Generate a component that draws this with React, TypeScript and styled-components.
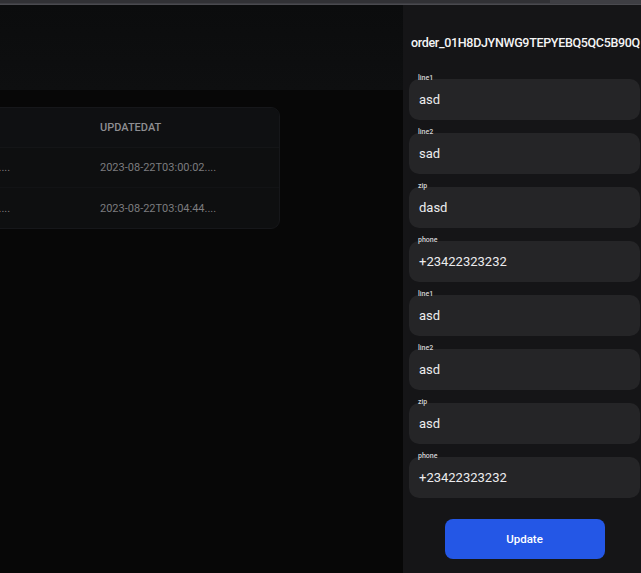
import styled, { createGlobalStyle } from "styled-components";

const GlobalStyle = createGlobalStyle`
  html, body {
    margin: 0;
    padding: 0;
    background: #070707;
    font-family: Roboto, "Liberation Sans", sans-serif;
    overflow: hidden;
  }
  * {
    box-sizing: border-box;
  }
`;

const rows = [
  { created: "2023-08-22T02:59:57....", updated: "2023-08-22T03:00:02...." },
  { created: "2023-08-22T03:04:37....", updated: "2023-08-22T03:04:44...." },
];

const fields = [
  { label: "line1", value: "asd" },
  { label: "line2", value: "sad" },
  { label: "zip", value: "dasd" },
  { label: "phone", value: "+23422323232" },
  { label: "line1", value: "asd" },
  { label: "line2", value: "asd" },
  { label: "zip", value: "asd" },
  { label: "phone", value: "+23422323232" },
];

const App = () => {
  return (
    <>
      <GlobalStyle />
      <StyledPage>
        <TopBar>
          <span className="thumb" />
        </TopBar>
        <Main>
          <LeftPane>
            <PaneHeader />
            <TableWrap>
              <Table>
                <HeadRow>
                  <Cell $head>CREATEDAT</Cell>
                  <Cell $head>UPDATEDAT</Cell>
                </HeadRow>
                {rows.map((r, i) => (
                  <Row key={i} $last={i === rows.length - 1}>
                    <Cell>{r.created}</Cell>
                    <Cell>{r.updated}</Cell>
                  </Row>
                ))}
              </Table>
            </TableWrap>
          </LeftPane>
          <SidePanel>
            <Title>order_01H8DJYNWG9TEPYEBQ5QC5B90Q</Title>
            <FieldList>
              {fields.map((f, i) => (
                <Field key={i}>
                  <FieldLabel>{f.label}</FieldLabel>
                  <FieldBox>{f.value}</FieldBox>
                </Field>
              ))}
            </FieldList>
            <Actions>
              <UpdateButton>Update</UpdateButton>
            </Actions>
          </SidePanel>
        </Main>
      </StyledPage>
    </>
  );
};

const StyledPage = styled.div`
  width: 100vw;
  height: 100vh;
  display: flex;
  flex-direction: column;
`;

const TopBar = styled.div`
  height: 5px;
  background: #3e3e43;
  border-bottom: 1px solid #4a4a4f;
  display: flex;
  .thumb {
    width: 550px;
    height: 3px;
    background: #313135;
  }
`;

const Main = styled.div`
  flex: 1;
  display: flex;
  min-height: 0;
`;

const LeftPane = styled.div`
  flex: 1;
  overflow: hidden;
  background: #070707;
`;

const PaneHeader = styled.div`
  height: 85px;
  background: linear-gradient(#0b0c0d, #0e0f10);
`;

const TableWrap = styled.div`
  padding-top: 17px;
  display: flex;
`;

const Table = styled.div`
  margin-left: -122px;
  width: 402px;
  flex-shrink: 0;
  background: #0e0f10;
  border: 1px solid #16171a;
  border-radius: 9px;
  overflow: hidden;
`;

const HeadRow = styled.div`
  display: grid;
  grid-template-columns: 206px 1fr;
  height: 40px;
  align-items: center;
  background: #0f1012;
  border-bottom: 1px solid #141517;
`;

const Row = styled.div<{ $last?: boolean }>`
  display: grid;
  grid-template-columns: 206px 1fr;
  height: 40px;
  align-items: center;
  border-bottom: ${(p) => (p.$last ? "none" : "1px solid #121315")};
`;

const Cell = styled.div<{ $head?: boolean }>`
  padding-left: 15px;
  font-size: 11px;
  font-weight: ${(p) => (p.$head ? 500 : 400)};
  color: ${(p) => (p.$head ? "#8e8e91" : "#7c7c7f")};
  white-space: nowrap;
`;

const SidePanel = styled.aside`
  width: 238px;
  flex-shrink: 0;
  background: #151517;
  padding: 30px 1px 0 6px;
  display: flex;
  flex-direction: column;
`;

const Title = styled.h2`
  margin: 0 0 0 2px;
  font-size: 12.5px;
  line-height: 16px;
  font-weight: 500;
  color: #f4f4f5;
  white-space: nowrap;
  letter-spacing: -0.32px;
`;

const FieldList = styled.div`
  margin-top: 23px;
  display: flex;
  flex-direction: column;
  gap: 8px;
`;

const Field = styled.div`
  display: flex;
  flex-direction: column;
`;

const FieldLabel = styled.label`
  position: relative;
  z-index: 1;
  font-size: 7px;
  line-height: 8px;
  height: 8px;
  margin-bottom: -3px;
  padding-left: 9px;
  color: #d4d4d6;
  font-weight: 500;
`;

const FieldBox = styled.div`
  height: 41px;
  border-radius: 10px;
  background: #252527;
  padding: 0 10px 1px;
  display: flex;
  align-items: center;
  font-size: 13px;
  color: #ececee;
`;

const Actions = styled.div`
  margin-top: 21px;
  display: flex;
  justify-content: center;
`;

const UpdateButton = styled.button`
  width: 160px;
  height: 40px;
  border: none;
  border-radius: 8px;
  background: #2457e6;
  color: #ffffff;
  font-family: Roboto, "Liberation Sans", sans-serif;
  font-size: 11.5px;
  font-weight: 500;
  cursor: pointer;
`;

export default App;
